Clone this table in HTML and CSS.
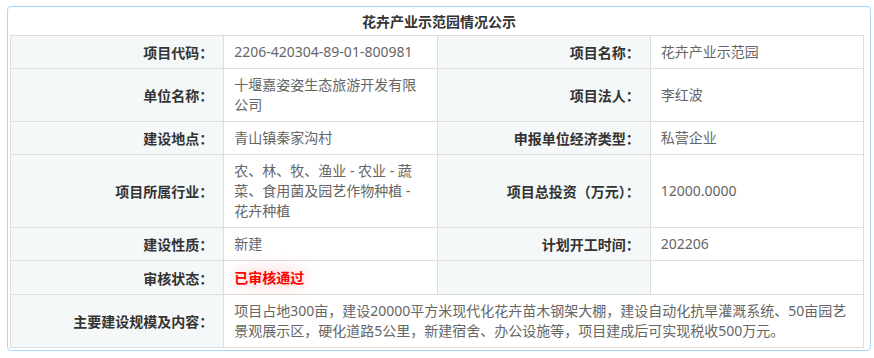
FILE: index.html
```html
<!DOCTYPE html>
<html lang="zh-CN">
<head>
<meta charset="utf-8">
<title>花卉产业示范园情况公示</title>
<link rel="stylesheet" href="styles.css">
</head>
<body>
<div class="panel">
  <div class="panel-title">花卉产业示范园情况公示</div>
  <table class="info">
    <colgroup><col><col><col><col></colgroup>
    <tr>
      <th>项目代码：</th><td>2206-420304-89-01-800981</td>
      <th>项目名称：</th><td>花卉产业示范园</td>
    </tr>
    <tr>
      <th>单位名称：</th><td>十堰嘉姿姿生态旅游开发有限公司</td>
      <th>项目法人：</th><td>李红波</td>
    </tr>
    <tr>
      <th>建设地点：</th><td>青山镇秦家沟村</td>
      <th>申报单位经济类型：</th><td>私营企业</td>
    </tr>
    <tr>
      <th>项目所属行业：</th><td>农、林、牧、渔业 - 农业 - 蔬菜、食用菌及园艺作物种植 - 花卉种植</td>
      <th>项目总投资（万元）：</th><td>12000.0000</td>
    </tr>
    <tr>
      <th>建设性质：</th><td>新建</td>
      <th>计划开工时间：</th><td>202206</td>
    </tr>
    <tr>
      <th>审核状态：</th><td><span class="status">已审核通过</span></td>
      <th></th><td></td>
    </tr>
    <tr>
      <th>主要建设规模及内容：</th>
      <td colspan="3">项目占地300亩，建设20000平方米现代化花卉苗木钢架大棚，建设自动化抗旱灌溉系统、50亩园艺景观展示区，硬化道路5公里，新建宿舍、办公设施等，项目建成后可实现税收500万元。</td>
    </tr>
  </table>
</div>
</body>
</html>
```

FILE: styles.css
```css
html, body {
  margin: 0;
  padding: 0;
  background: #fff;
}
body {
  padding: 6px 0 0 7px;
  font-family: "Noto Sans", "Noto Sans CJK SC", sans-serif;
  font-size: 14px;
  color: #666;
}
.panel {
  width: 858px;
  border: 1px solid #a9d6fb;
  border-radius: 4px;
  padding: 0 2px 2px 2px;
}
.panel-title {
  height: 28px;
  line-height: 28px;
  text-align: center;
  font-weight: bold;
  font-size: 14px;
  color: #333;
  font-family: "Noto Sans CJK SC", sans-serif;
}
.info {
  width: 854px;
  border-collapse: collapse;
  table-layout: fixed;
}
.info col {
  width: 25%;
}
.info th,
.info td {
  border: 1px solid #ddd;
  padding: 6px 10px;
  line-height: 20px;
  font-size: 14px;
  vertical-align: middle;
}
.info th {
  background: #f4f8f8;
  color: #333;
  font-weight: bold;
  text-align: right;
  font-family: "Noto Sans CJK SC", sans-serif;
}
.info td {
  color: #666;
  text-align: left;
  background: #fff;
}
.status {
  color: #f00;
  font-weight: bold;
  font-family: "Noto Sans CJK SC", sans-serif;
  text-shadow: 0 0 18px rgba(255, 0, 0, 0.35);
}
```
